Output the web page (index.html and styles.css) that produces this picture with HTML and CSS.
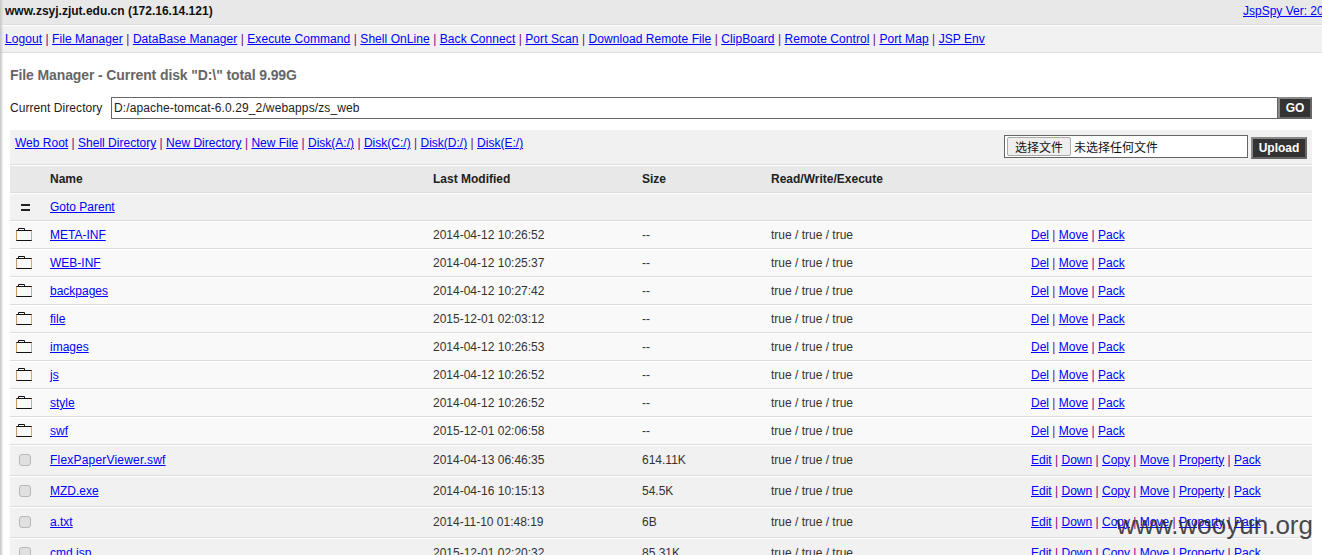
FILE: index.html
```html
<!DOCTYPE html>
<html lang="en">
<head>
    <meta charset="UTF-8">
    <title>JspSpy</title>
    <link rel="stylesheet" href="styles.css">
</head>
<body>
    <div class="head">
        <b>www.zsyj.zjut.edu.cn (172.16.14.121)</b>
        <a href="#" class="version">JspSpy Ver: 2009</a>
    </div>
    <div class="nav">
        <a href="#">Logout</a> | <a href="#">File Manager</a> | <a href="#">DataBase Manager</a> | <a href="#">Execute Command</a> | <a href="#">Shell OnLine</a> | <a href="#">Back Connect</a> | <a href="#">Port Scan</a> | <a href="#">Download Remote File</a> | <a href="#">ClipBoard</a> | <a href="#">Remote Control</a> | <a href="#">Port Map</a> | <a href="#">JSP Env</a>
    </div>
    <div class="main">
        <h2>File Manager - Current disk "D:\" total 9.99G</h2>
        <div class="dir-form">
            <label>Current Directory</label>
            <input class="dir-input" type="text" value="D:/apache-tomcat-6.0.29_2/webapps/zs_web">
            <button class="bt go">GO</button>
        </div>
        <div class="tools">
            <div class="tool-links">
                <a href="#">Web Root</a> | <a href="#">Shell Directory</a> | <a href="#">New Directory</a> | <a href="#">New File</a> | <a href="#">Disk(A:/)</a> | <a href="#">Disk(C:/)</a> | <a href="#">Disk(D:/)</a> | <a href="#">Disk(E:/)</a>
            </div>
            <div class="upload">
                <div class="file-box"><span class="file-btn">选择文件</span><span class="file-name">未选择任何文件</span></div>
                <button class="bt">Upload</button>
            </div>
        </div>
        <table class="files">
            <tr class="title">
                <td class="c-icon"></td>
                <td class="c-name">Name</td>
                <td class="c-date">Last Modified</td>
                <td class="c-size">Size</td>
                <td class="c-rwx">Read/Write/Execute</td>
                <td></td>
            </tr>
            <tr class="parent">
                <td class="c-icon"><span class="eq"></span></td>
                <td colspan="5"><a href="#">Goto Parent</a></td>
            </tr>
            <tr class="dir">
                <td class="c-icon"><svg class="folder" width="16" height="13" viewBox="0 0 16 13"><path d="M.5 2.5h15v10H.5z" fill="none" stroke="#111"/><path d="M15.5 3v9" stroke="#e8a860"/><path d="M.5 12V3" stroke="#c9996a"/><path d="M2.5 2V.5h6V2" fill="none" stroke="#111"/></svg></td>
                <td><a href="#">META-INF</a></td><td>2014-04-12 10:26:52</td><td>--</td><td>true / true / true</td>
                <td><a href="#">Del</a> | <a href="#">Move</a> | <a href="#">Pack</a></td>
            </tr>
            <tr class="dir">
                <td class="c-icon"><svg class="folder" width="16" height="13" viewBox="0 0 16 13"><path d="M.5 2.5h15v10H.5z" fill="none" stroke="#111"/><path d="M15.5 3v9" stroke="#e8a860"/><path d="M.5 12V3" stroke="#c9996a"/><path d="M2.5 2V.5h6V2" fill="none" stroke="#111"/></svg></td>
                <td><a href="#">WEB-INF</a></td><td>2014-04-12 10:25:37</td><td>--</td><td>true / true / true</td>
                <td><a href="#">Del</a> | <a href="#">Move</a> | <a href="#">Pack</a></td>
            </tr>
            <tr class="dir">
                <td class="c-icon"><svg class="folder" width="16" height="13" viewBox="0 0 16 13"><path d="M.5 2.5h15v10H.5z" fill="none" stroke="#111"/><path d="M15.5 3v9" stroke="#e8a860"/><path d="M.5 12V3" stroke="#c9996a"/><path d="M2.5 2V.5h6V2" fill="none" stroke="#111"/></svg></td>
                <td><a href="#">backpages</a></td><td>2014-04-12 10:27:42</td><td>--</td><td>true / true / true</td>
                <td><a href="#">Del</a> | <a href="#">Move</a> | <a href="#">Pack</a></td>
            </tr>
            <tr class="dir">
                <td class="c-icon"><svg class="folder" width="16" height="13" viewBox="0 0 16 13"><path d="M.5 2.5h15v10H.5z" fill="none" stroke="#111"/><path d="M15.5 3v9" stroke="#e8a860"/><path d="M.5 12V3" stroke="#c9996a"/><path d="M2.5 2V.5h6V2" fill="none" stroke="#111"/></svg></td>
                <td><a href="#">file</a></td><td>2015-12-01 02:03:12</td><td>--</td><td>true / true / true</td>
                <td><a href="#">Del</a> | <a href="#">Move</a> | <a href="#">Pack</a></td>
            </tr>
            <tr class="dir">
                <td class="c-icon"><svg class="folder" width="16" height="13" viewBox="0 0 16 13"><path d="M.5 2.5h15v10H.5z" fill="none" stroke="#111"/><path d="M15.5 3v9" stroke="#e8a860"/><path d="M.5 12V3" stroke="#c9996a"/><path d="M2.5 2V.5h6V2" fill="none" stroke="#111"/></svg></td>
                <td><a href="#">images</a></td><td>2014-04-12 10:26:53</td><td>--</td><td>true / true / true</td>
                <td><a href="#">Del</a> | <a href="#">Move</a> | <a href="#">Pack</a></td>
            </tr>
            <tr class="dir">
                <td class="c-icon"><svg class="folder" width="16" height="13" viewBox="0 0 16 13"><path d="M.5 2.5h15v10H.5z" fill="none" stroke="#111"/><path d="M15.5 3v9" stroke="#e8a860"/><path d="M.5 12V3" stroke="#c9996a"/><path d="M2.5 2V.5h6V2" fill="none" stroke="#111"/></svg></td>
                <td><a href="#">js</a></td><td>2014-04-12 10:26:52</td><td>--</td><td>true / true / true</td>
                <td><a href="#">Del</a> | <a href="#">Move</a> | <a href="#">Pack</a></td>
            </tr>
            <tr class="dir">
                <td class="c-icon"><svg class="folder" width="16" height="13" viewBox="0 0 16 13"><path d="M.5 2.5h15v10H.5z" fill="none" stroke="#111"/><path d="M15.5 3v9" stroke="#e8a860"/><path d="M.5 12V3" stroke="#c9996a"/><path d="M2.5 2V.5h6V2" fill="none" stroke="#111"/></svg></td>
                <td><a href="#">style</a></td><td>2014-04-12 10:26:52</td><td>--</td><td>true / true / true</td>
                <td><a href="#">Del</a> | <a href="#">Move</a> | <a href="#">Pack</a></td>
            </tr>
            <tr class="dir">
                <td class="c-icon"><svg class="folder" width="16" height="13" viewBox="0 0 16 13"><path d="M.5 2.5h15v10H.5z" fill="none" stroke="#111"/><path d="M15.5 3v9" stroke="#e8a860"/><path d="M.5 12V3" stroke="#c9996a"/><path d="M2.5 2V.5h6V2" fill="none" stroke="#111"/></svg></td>
                <td><a href="#">swf</a></td><td>2015-12-01 02:06:58</td><td>--</td><td>true / true / true</td>
                <td><a href="#">Del</a> | <a href="#">Move</a> | <a href="#">Pack</a></td>
            </tr>
            <tr class="file">
                <td class="c-icon"><span class="check"></span></td>
                <td><a href="#" class="wide">FlexPaperViewer.swf</a></td><td>2014-04-13 06:46:35</td><td>614.11K</td><td>true / true / true</td>
                <td><a href="#">Edit</a> | <a href="#">Down</a> | <a href="#">Copy</a> | <a href="#">Move</a> | <a href="#">Property</a> | <a href="#">Pack</a></td>
            </tr>
            <tr class="file">
                <td class="c-icon"><span class="check"></span></td>
                <td><a href="#">MZD.exe</a></td><td>2014-04-16 10:15:13</td><td>54.5K</td><td>true / true / true</td>
                <td><a href="#">Edit</a> | <a href="#">Down</a> | <a href="#">Copy</a> | <a href="#">Move</a> | <a href="#">Property</a> | <a href="#">Pack</a></td>
            </tr>
            <tr class="file">
                <td class="c-icon"><span class="check"></span></td>
                <td><a href="#">a.txt</a></td><td>2014-11-10 01:48:19</td><td>6B</td><td>true / true / true</td>
                <td><a href="#">Edit</a> | <a href="#">Down</a> | <a href="#">Copy</a> | <a href="#">Move</a> | <a href="#">Property</a> | <a href="#">Pack</a></td>
            </tr>
            <tr class="file">
                <td class="c-icon"><span class="check"></span></td>
                <td><a href="#">cmd.jsp</a></td><td>2015-12-01 02:20:32</td><td>85.31K</td><td>true / true / true</td>
                <td><a href="#">Edit</a> | <a href="#">Down</a> | <a href="#">Copy</a> | <a href="#">Move</a> | <a href="#">Property</a> | <a href="#">Pack</a></td>
            </tr>
        </table>
    </div>
    <div class="watermark">www.wooyun.org</div>
</body>
</html>
```

FILE: styles.css
```css
html, body {
    height: 100%;
    overflow: hidden;
}

body {
    margin: 0;
    background: #fff;
    color: #333;
    font: 12px "Liberation Sans", Arial, sans-serif;
    position: relative;
}

body::before {
    content: "";
    position: absolute;
    left: 0;
    top: 0;
    bottom: 0;
    width: 3px;
    background: linear-gradient(90deg, #c4c4c4, rgba(220, 220, 220, 0.3));
}

a {
    color: #00f;
}

.head {
    display: flex;
    justify-content: space-between;
    height: 24px;
    line-height: 23px;
    padding-left: 5px;
    background: #e8e8e8;
    border-bottom: 1px solid #ddd;
    color: #111;
    white-space: nowrap;
}

.version {
    width: 79px;
    overflow: hidden;
}

.nav {
    height: 26px;
    line-height: 26px;
    padding-left: 5px;
    background: #f1f1f1;
    border-top: 1px solid #fff;
    border-bottom: 1px solid #ddd;
    color: #800080;
    letter-spacing: 0.065px;
    white-space: nowrap;
}

.main {
    padding: 0 10px;
}

h2 {
    margin: 0;
    padding-top: 15px;
    height: 29px;
    line-height: 14px;
    font-size: 14px;
    letter-spacing: -0.11px;
    color: #666;
}

.dir-form {
    display: flex;
    align-items: center;
    height: 22px;
}

.dir-form label {
    width: 101px;
    color: #222;
    letter-spacing: 0.06px;
    white-space: nowrap;
}

.dir-input {
    flex: 1;
    height: 22px;
    box-sizing: border-box;
    padding: 0 2px;
    border: 1px solid #666;
    font: 12px "Liberation Sans", Arial, sans-serif;
    letter-spacing: 0.12px;
    color: #222;
}

.bt {
    height: 22px;
    box-sizing: border-box;
    padding: 0;
    border: 2px solid #999;
    border-color: #888 #666 #666 #888;
    background: #333;
    color: #fff;
    font: bold 12px "Liberation Sans", Arial, sans-serif;
}

.go {
    width: 34px;
}

.tools {
    display: flex;
    justify-content: space-between;
    height: 34px;
    margin-top: 11px;
    padding: 0 5px;
    background: #f1f1f1;
    border-bottom: 1px solid #ddd;
}

.tool-links {
    padding-top: 5px;
    line-height: 16px;
    color: #800080;
    letter-spacing: 0.01px;
}

.upload {
    display: flex;
    gap: 3px;
    padding-top: 5px;
}

.upload .bt {
    margin-top: 2px;
    width: 56px;
}

.file-box {
    display: flex;
    align-items: center;
    width: 244px;
    height: 23px;
    box-sizing: border-box;
    border: 1px solid #666;
    background: #fff;
    padding-left: 2px;
    font: 12px "Noto Sans CJK SC", sans-serif;
    color: #111;
}

.file-btn {
    width: 64px;
    height: 19px;
    box-sizing: border-box;
    line-height: 17px;
    text-align: center;
    background: #eee;
    border: 1px solid #aaa;
    border-radius: 2px;
    margin-right: 3px;
}

.files {
    width: 100%;
    border-collapse: separate;
    border-spacing: 0;
    table-layout: fixed;
}

.files td {
    padding: 0;
    border-top: 1px solid #fff;
    border-bottom: 1px solid #ddd;
    white-space: nowrap;
    color: #333;
}

.files tr td:last-child {
    color: #800080;
    width: 281px;
}

.title td {
    height: 26px;
    background: #e8e8e8;
    font-weight: bold;
    color: #222;
}

.parent td {
    height: 26px;
    background: #f1f1f1;
}

.dir td {
    height: 26px;
    background: #f9f9f9;
}

.file td {
    height: 27px;
    padding-bottom: 2px;
    background: #f1f1f1;
}

.wide {
    letter-spacing: 0.2px;
}

.files .c-icon {
    width: 40px;
}

.c-name {
    width: 383px;
}

.c-date {
    width: 209px;
}

.c-size {
    width: 129px;
}

.c-rwx {
    width: 260px;
}

.folder {
    display: block;
    margin: 0 0 1px 6px;
}

.eq {
    display: block;
    width: 9px;
    height: 3px;
    margin-left: 11px;
    border-top: 2px solid #222;
    border-bottom: 2px solid #222;
}

.check {
    display: block;
    width: 10px;
    height: 10px;
    margin-left: 9px;
    background: #e0e0e0;
    border: 1px solid #b8b8b8;
    border-radius: 3px;
}

.watermark {
    position: absolute;
    right: 9px;
    top: 510px;
    font: 26px "Liberation Sans", Arial, sans-serif;
    color: rgba(40, 40, 40, 0.85);
}
```
